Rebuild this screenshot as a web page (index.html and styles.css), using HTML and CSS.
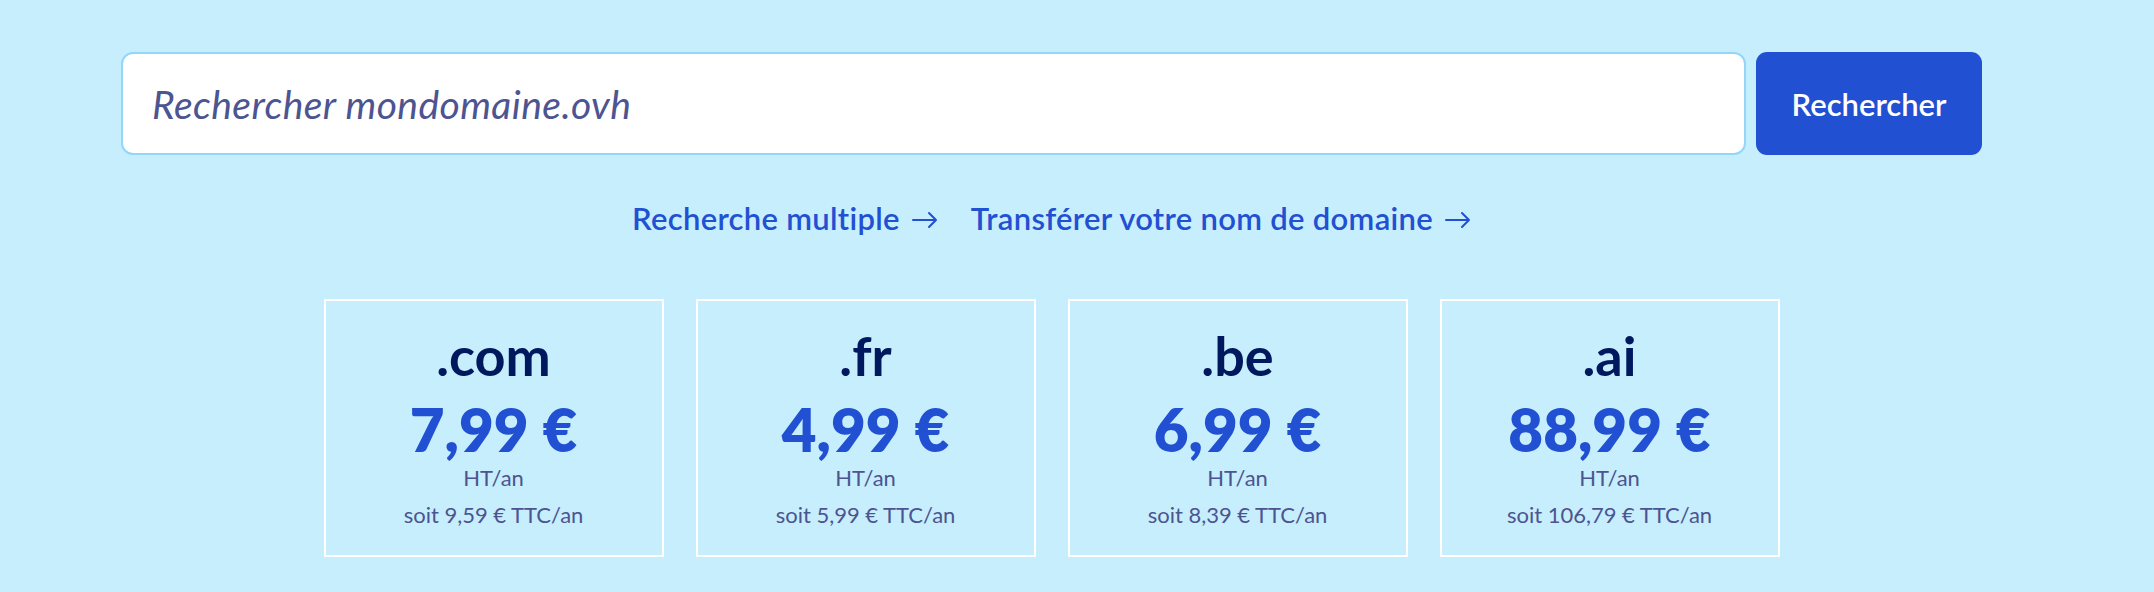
FILE: index.html
```html
<!DOCTYPE html>
<html lang="fr">
<head>
<meta charset="utf-8">
<title>Recherche de domaine</title>
<link rel="stylesheet" href="styles.css">
</head>
<body>
<main class="page">
  <form class="search">
    <input class="search-input" type="text" placeholder="Rechercher mondomaine.ovh">
    <button class="search-btn" type="button">Rechercher</button>
  </form>
  <nav class="links">
    <a class="link" href="#">Recherche multiple <svg class="arrow" viewBox="0 0 26 18" width="26" height="18"><path d="M1 9H24M17 2L24 9L17 16" fill="none" stroke="currentColor" stroke-width="2" stroke-linecap="round" stroke-linejoin="round"/></svg></a>
    <a class="link" href="#">Transférer votre nom de domaine <svg class="arrow" viewBox="0 0 26 18" width="26" height="18"><path d="M1 9H24M17 2L24 9L17 16" fill="none" stroke="currentColor" stroke-width="2" stroke-linecap="round" stroke-linejoin="round"/></svg></a>
  </nav>
  <section class="cards">
    <div class="card">
      <div class="tld">.com</div>
      <div class="price">7,99 €</div>
      <div class="unit">HT/an</div>
      <div class="ttc">soit 9,59 € TTC/an</div>
    </div>
    <div class="card">
      <div class="tld">.fr</div>
      <div class="price">4,99 €</div>
      <div class="unit">HT/an</div>
      <div class="ttc">soit 5,99 € TTC/an</div>
    </div>
    <div class="card">
      <div class="tld">.be</div>
      <div class="price">6,99 €</div>
      <div class="unit">HT/an</div>
      <div class="ttc">soit 8,39 € TTC/an</div>
    </div>
    <div class="card">
      <div class="tld">.ai</div>
      <div class="price">88,99 €</div>
      <div class="unit">HT/an</div>
      <div class="ttc">soit 106,79 € TTC/an</div>
    </div>
  </section>
</main>
</body>
</html>
```
FILE: styles.css
```css
* { box-sizing: border-box; }

html, body {
  margin: 0;
  padding: 0;
  background: #c7eefd;
  font-family: "Lato", "Noto Sans", sans-serif;
}

.page {
  width: 1861px;
  margin-left: 121px;
  padding-top: 52px;
}

.search {
  display: flex;
  gap: 10px;
  margin: 0;
}

.search-input {
  flex: 1;
  height: 103px;
  border: 2px solid #93d6f7;
  border-radius: 12px;
  background: #ffffff;
  padding: 0 0 0 29px;
  font-family: "Lato", "Noto Sans", sans-serif;
  font-size: 39px;
  letter-spacing: 0.45px;
  font-style: italic;
  color: #4c5491;
  outline: none;
}

.search-input::placeholder {
  color: #4c5491;
  opacity: 1;
}

.search-btn {
  width: 226px;
  height: 103px;
  border: none;
  border-radius: 11px;
  background: #2150d2;
  color: #ffffff;
  font-family: "Lato", "Noto Sans", sans-serif;
  font-size: 31px;
  font-weight: 600;
  padding: 0;
}

.links {
  display: flex;
  justify-content: center;
  gap: 33px;
  margin-top: 43px;
  height: 40px;
  align-items: center;
}

.link {
  display: inline-flex;
  align-items: center;
  gap: 12px;
  color: #2150d2;
  font-size: 31px;
  font-weight: 600;
  letter-spacing: 0.3px;
  text-decoration: none;
  line-height: 40px;
}

.arrow {
  display: block;
  margin-top: 3px;
}

.cards {
  display: flex;
  justify-content: center;
  gap: 32px;
  margin-top: 61px;
}

.card {
  width: 340px;
  height: 258px;
  border: 2px solid #ffffff;
  padding-top: 25px;
  text-align: center;
}

.tld {
  font-size: 54px;
  font-weight: 700;
  color: #00185e;
  line-height: 60px;
}

.price {
  margin-top: 8px;
  font-size: 60px;
  font-weight: 800;
  color: #2150d2;
  line-height: 70px;
}

.unit {
  font-size: 22px;
  color: #4c5491;
  line-height: 28px;
}

.ttc {
  margin-top: 9px;
  font-size: 22px;
  color: #4c5491;
  line-height: 28px;
}
```
